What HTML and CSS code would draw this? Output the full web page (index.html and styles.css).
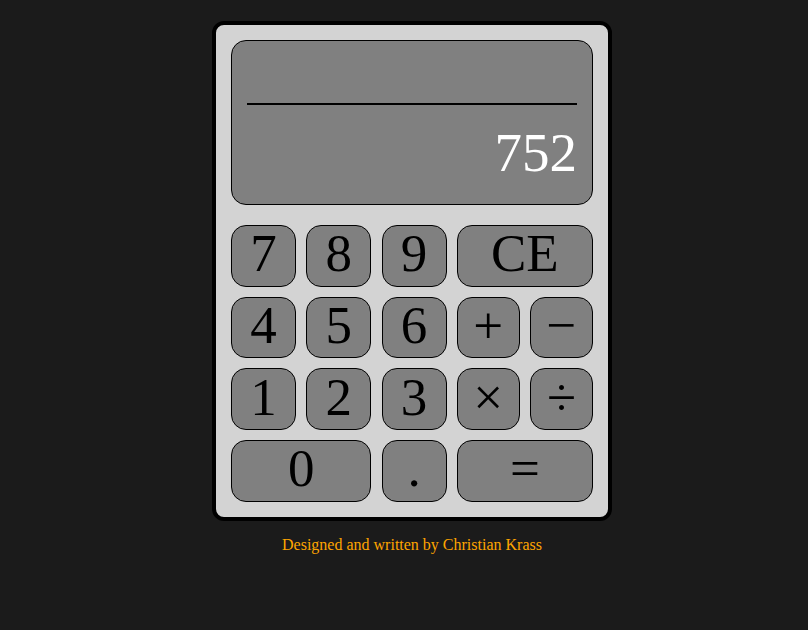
FILE: index.html
```html
<!DOCTYPE html>
<html lang="en">
<head>
<meta charset="utf-8">
<title>Calculator</title>
<link rel="stylesheet" href="styles.css">
</head>
<body>
<div class="page">
  <div class="calc">
    <div class="display">
      <div class="display-top"></div>
      <div class="display-value">752</div>
    </div>
    <div class="keys">
      <button class="key">7</button>
      <button class="key">8</button>
      <button class="key">9</button>
      <button class="key key-wide">CE</button>
      <button class="key">4</button>
      <button class="key">5</button>
      <button class="key">6</button>
      <button class="key">+</button>
      <button class="key">&minus;</button>
      <button class="key">1</button>
      <button class="key">2</button>
      <button class="key">3</button>
      <button class="key">&times;</button>
      <button class="key">&divide;</button>
      <button class="key key-wide">0</button>
      <button class="key">.</button>
      <button class="key key-wide">=</button>
    </div>
  </div>
  <p class="credit">Designed and written by Christian Krass</p>
</div>
</body>
</html>
```

FILE: styles.css
```css
html, body {
  margin: 0;
  padding: 0;
  background: #1b1b1b;
  font-family: "Liberation Serif", "Times New Roman", serif;
}

.page {
  display: flex;
  flex-direction: column;
  align-items: center;
  padding: 21px 0 0 16px;
}

.calc {
  box-sizing: border-box;
  width: 400px;
  height: 500px;
  border: 4px solid #000;
  border-radius: 12px;
  background: #d3d3d3;
  padding: 15px;
}

.display {
  box-sizing: border-box;
  height: 165px;
  border: 1px solid #000;
  border-radius: 15px;
  background: #808080;
  padding: 0 15px;
}

.display-top {
  height: 62px;
  border-bottom: 2px solid #000;
}

.display-value {
  margin-top: 16px;
  text-align: right;
  color: #fff;
  font-size: 55px;
  line-height: normal;
}

.keys {
  margin-top: 20px;
  display: grid;
  grid-template-columns: 65px 65px 65px 1fr 1fr;
  grid-auto-rows: 61.7px;
  column-gap: 10.25px;
  row-gap: 10px;
}

.key {
  box-sizing: border-box;
  margin: 0;
  padding: 0 0 4px;
  border: 1px solid #000;
  border-radius: 15px;
  background: #808080;
  color: #000;
  font-family: "Liberation Serif", "Times New Roman", serif;
  font-size: 53px;
  line-height: 1;
}

.key-wide {
  grid-column: span 2;
}

.credit {
  margin: 15px 0 0;
  color: #ffa500;
  font-size: 16px;
}
```
